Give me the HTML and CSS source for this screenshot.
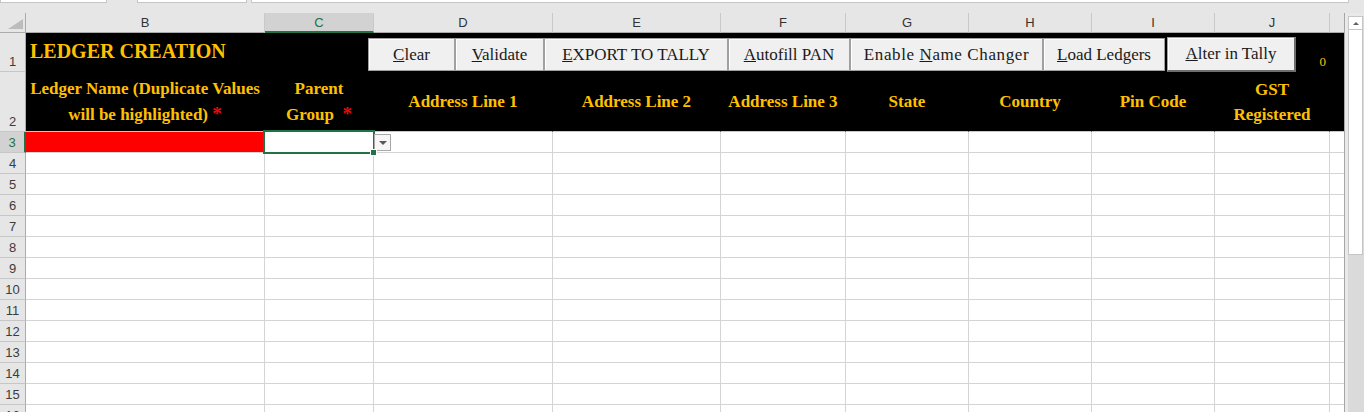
FILE: index.html
```html
<!DOCTYPE html>
<html lang="en">
<head>
  <meta charset="UTF-8" />
  <meta name="viewport" content="width=device-width, initial-scale=1.0"/>
  <title>Ledger Creation</title>
  <link rel="stylesheet" href="styles.css">
</head>
<body>
  <div class="toolbar">
    <div class="tb-box tb-name"></div>
    <div class="tb-box tb-fx"></div>
    <div class="tb-box tb-formula"></div>
  </div>

  <div class="sheet" id="sheet">
    <div class="row">
      <div class="corner"><span class="corner-tri"></span></div>
      <div class="col-head">B</div>
      <div class="col-head active">C</div>
      <div class="col-head">D</div>
      <div class="col-head">E</div>
      <div class="col-head">F</div>
      <div class="col-head">G</div>
      <div class="col-head">H</div>
      <div class="col-head">I</div>
      <div class="col-head">J</div>
      <div class="col-head edge"></div>
    </div>

    <div class="scrollbar">
      <div class="scroll-track">
        <div class="scroll-up"><span class="arrow-up"></span></div>
        <div class="scroll-thumb"></div>
      </div>
    </div>

    <div class="row r1">
      <div class="row-head">1</div>
      <div class="cell dark title">LEDGER CREATION</div>
      <div class="cell dark"></div>
      <div class="cell dark"></div>
      <div class="cell dark"></div>
      <div class="cell dark"></div>
      <div class="cell dark"></div>
      <div class="cell dark"></div>
      <div class="cell dark"></div>
      <div class="cell dark counter">0</div>
      <div class="cell dark edge"></div>
    </div>

    <div class="row r2">
      <div class="row-head">2</div>
      <div class="cell dark label"><span>Ledger Name (Duplicate Values<br>will be highlighted) <span class="req">*</span></span></div>
      <div class="cell dark label"><span>Parent<br>Group&nbsp; <span class="req">*</span></span></div>
      <div class="cell dark label"><span>Address Line 1</span></div>
      <div class="cell dark label"><span>Address Line 2</span></div>
      <div class="cell dark label"><span>Address Line 3</span></div>
      <div class="cell dark label"><span>State</span></div>
      <div class="cell dark label"><span>Country</span></div>
      <div class="cell dark label"><span>Pin Code</span></div>
      <div class="cell dark label"><span>GST<br>Registered</span></div>
      <div class="cell dark edge"></div>
    </div>

    <div class="row r3">
      <div class="row-head current">3</div>
      <div class="cell error"></div>
      <div class="cell selected">
        <span class="sel-frame"></span>
        <span class="dropdown"><span class="arrow-down"></span></span>
        <span class="fill-handle"></span>
      </div>
      <div class="cell"></div>
      <div class="cell"></div>
      <div class="cell"></div>
      <div class="cell"></div>
      <div class="cell"></div>
      <div class="cell"></div>
      <div class="cell"></div>
      <div class="cell edge"></div>
    </div>

    <div class="buttons">
      <button class="btn btn-clear"><u>C</u>lear</button>
      <button class="btn btn-validate"><u>V</u>alidate</button>
      <button class="btn btn-export"><u>E</u>XPORT TO TALLY</button>
      <button class="btn btn-pan"><u>A</u>utofill PAN</button>
      <button class="btn btn-name">Enable <u>N</u>ame Changer</button>
      <button class="btn btn-load"><u>L</u>oad Ledgers</button>
      <button class="btn btn-alter focus"><u>A</u>lter in Tally</button>
    </div>
  </div>

  <script>
    // empty rows below the header block
    const sheet = document.getElementById("sheet");
    for (let r = 4; r <= 17; r++) {
      const row = document.createElement("div");
      row.className = "row";
      const head = document.createElement("div");
      head.className = "row-head";
      head.textContent = r;
      row.appendChild(head);
      for (let c = 0; c < 10; c++) {
        const cell = document.createElement("div");
        cell.className = c === 9 ? "cell edge" : "cell";
        row.appendChild(cell);
      }
      sheet.appendChild(row);
    }
  </script>
</body>
</html>
```

FILE: styles.css
```css
body {
  margin: 0;
  background-color: #e6e6e6;
  font-family: "Liberation Sans", Arial, sans-serif;
  overflow: hidden;
}

/* formula bar remains at the top */
.toolbar {
  display: flex;
  align-items: flex-start;
  height: 13px;
}

.tb-box {
  height: 2px;
  background-color: #fff;
  border: 1px solid #c6c6c6;
  border-top: none;
}

.tb-name {
  width: 105px;
}

.tb-fx {
  width: 108px;
  margin-left: 30px;
}

.tb-formula {
  width: 1096px;
  margin-left: 4px;
}

/* grid */
.sheet {
  position: relative;
  display: grid;
  grid-template-columns: 26px 239px 109px 179px 168px 125px 123px 123px 123px 115px 14px 20px;
  grid-template-rows: 20px 39px 60px;
  grid-auto-rows: 21px;
  height: 399px;
  overflow: hidden;
  background-color: #fff;
}

.row {
  display: contents;
}

.corner,
.col-head,
.row-head,
.cell {
  box-sizing: border-box;
}

.corner {
  display: flex;
  align-items: flex-end;
  justify-content: flex-end;
  padding: 0 2px 3px 0;
  background-color: #e6e6e6;
  border-right: 1px solid #ababab;
  border-bottom: 1px solid #ababab;
}

.corner-tri {
  width: 15px;
  height: 10px;
  background-color: #bcbcbc;
  clip-path: polygon(100% 0, 100% 100%, 0 100%);
}

.col-head {
  display: flex;
  align-items: center;
  justify-content: center;
  background-color: #e6e6e6;
  border-right: 1px solid #c9c9c9;
  border-bottom: 1px solid #ababab;
  font-size: 13px;
  color: #333;
}

.col-head.active {
  background-color: #d2d2d2;
  color: #217346;
  border-bottom: 2px solid #217346;
}

.col-head.edge {
  border-right: none;
}

.row-head {
  display: flex;
  align-items: flex-end;
  justify-content: center;
  padding-bottom: 2px;
  background-color: #e6e6e6;
  border-right: 1px solid #ababab;
  border-bottom: 1px solid #c6c6c6;
  font-size: 13px;
  color: #3c3c3c;
}

.row-head.current {
  background-color: #d2d2d2;
  color: #217346;
  border-right: 2px solid #217346;
}

.cell {
  border-right: 1px solid #d4d4d4;
  border-bottom: 1px solid #d4d4d4;
}

.cell.edge {
  border-right: none;
}

.cell.dark {
  background-color: #000;
  border-color: #000;
  color: #ffc000;
  font-family: "Liberation Serif", "Times New Roman", serif;
}

.r2 .cell.dark {
  border-bottom-color: #c8c8c8;
}

.title {
  display: flex;
  align-items: center;
  padding: 0 0 2px 4px;
  font-size: 20px;
  font-weight: bold;
  white-space: nowrap;
}

.counter {
  display: flex;
  align-items: flex-end;
  justify-content: flex-end;
  padding: 0 3px 3px 0;
  font-size: 13px;
  line-height: 13px;
}

.label {
  display: flex;
  align-items: center;
  justify-content: center;
  text-align: center;
  font-size: 17px;
  font-weight: bold;
  line-height: 25px;
  white-space: nowrap;
}

.req {
  color: #ff0000;
  font-size: 19px;
}

.cell.error {
  background-color: #ff0000;
}

.cell.selected {
  position: relative;
}

.sel-frame {
  position: absolute;
  left: -2px;
  top: -2px;
  right: -2px;
  bottom: -2px;
  border: 2px solid #217346;
}

.fill-handle {
  position: absolute;
  right: -3px;
  bottom: -3px;
  width: 5px;
  height: 5px;
  background-color: #217346;
  box-shadow: 0 0 0 1px #fff;
}

.dropdown {
  position: absolute;
  left: 109px;
  top: 2px;
  width: 17px;
  height: 17px;
  box-sizing: border-box;
  display: flex;
  align-items: center;
  justify-content: center;
  background-color: #f6f6f6;
  border: 1px solid #a9a9a9;
}

.arrow-down {
  width: 0;
  height: 0;
  border-left: 4px solid transparent;
  border-right: 4px solid transparent;
  border-top: 4px solid #595959;
}

/* vertical scrollbar */
.scrollbar {
  grid-column: 12;
  grid-row: 1 / span 20;
  box-sizing: border-box;
  padding: 3px 0 0 3px;
  background-color: #e9e9e9;
  border-left: 1px solid #a6a6a6;
}

.scroll-track {
  height: 100%;
  background-color: #dadada;
}

.scroll-up {
  display: flex;
  align-items: center;
  justify-content: center;
  width: 15px;
  height: 14px;
  box-sizing: border-box;
  background-color: #fff;
  border: 1px solid #c6c6c6;
}

.arrow-up {
  width: 0;
  height: 0;
  border-left: 3px solid transparent;
  border-right: 3px solid transparent;
  border-bottom: 3px solid #606060;
}

.scroll-thumb {
  width: 15px;
  height: 225px;
  box-sizing: border-box;
  background-color: #fff;
  border: 1px solid #c6c6c6;
  border-top: none;
}

/* macro buttons floating over row 1 */
.buttons {
  position: absolute;
  top: 25px;
  left: 368px;
  display: flex;
  align-items: flex-start;
}

.btn {
  height: 33px;
  box-sizing: border-box;
  padding: 0;
  background-color: #f0f0f0;
  border: 1px solid #a0a0a0;
  box-shadow: inset 1px 1px 0 #fff;
  font-family: "Liberation Serif", "Times New Roman", serif;
  font-size: 17px;
  color: #1a1a1a;
  white-space: nowrap;
}

.btn-clear { width: 87px; }
.btn-validate { width: 89px; }
.btn-export { width: 184px; }
.btn-pan { width: 122px; }
.btn-name { width: 193px; letter-spacing: 0.6px; }
.btn-load { width: 122px; }

.btn-alter {
  width: 129px;
  height: 35px;
  margin: -1px 0 0 2px;
}

.btn.focus {
  border-right: 2px solid #6e6e6e;
  border-bottom: 2px solid #6e6e6e;
}
```
